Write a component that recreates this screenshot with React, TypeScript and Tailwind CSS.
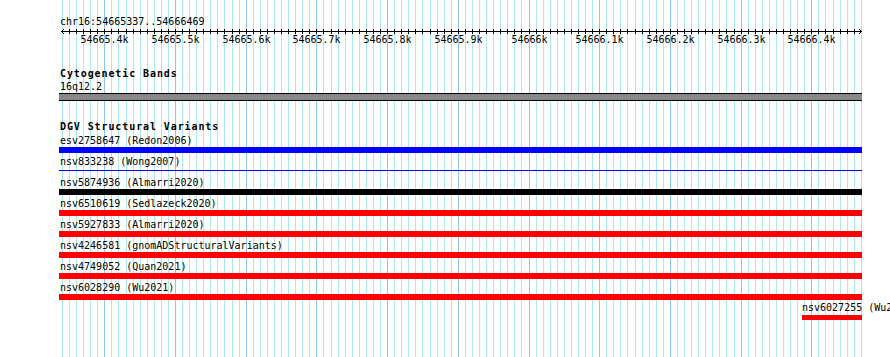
import React from "react";

const ticks = Array.from({ length: 114 }, (_, k) => {
  const i = k - 6;
  return { i, x: Math.round(104.3 + i * 7.07), major: i % 10 === 0 };
});

const majors = ticks
  .filter((t) => t.major)
  .map((t) => {
    const pos = 54665400 + t.i * 10;
    const k = pos / 1000;
    const label = (Number.isInteger(k) ? String(k) : k.toFixed(1)) + "k";
    return { x: t.x, label };
  });

type Row = { label: string; color: string; kind: "bar" | "line" };

const rows: Row[] = [
  { label: "esv2758647 (Redon2006)", color: "bg-[#0000ff]", kind: "bar" },
  { label: "nsv833238 (Wong2007)", color: "bg-[#0000ff]", kind: "line" },
  { label: "nsv5874936 (Almarri2020)", color: "bg-[#000000]", kind: "bar" },
  { label: "nsv6510619 (Sedlazeck2020)", color: "bg-[#ff0000]", kind: "bar" },
  { label: "nsv5927833 (Almarri2020)", color: "bg-[#ff0000]", kind: "bar" },
  { label: "nsv4246581 (gnomADStructuralVariants)", color: "bg-[#ff0000]", kind: "bar" },
  { label: "nsv4749052 (Quan2021)", color: "bg-[#ff0000]", kind: "bar" },
  { label: "nsv6028290 (Wu2021)", color: "bg-[#ff0000]", kind: "bar" },
];

function Grid() {
  return (
    <svg className="absolute inset-0" width={890} height={357} shapeRendering="crispEdges">
      {ticks.map((t) => (
        <rect
          key={t.i}
          x={t.x}
          y={0}
          width={1}
          height={357}
          fill={t.major ? "#8cc8ee" : "#ace8ee"}
        />
      ))}
    </svg>
  );
}

function Ruler() {
  return (
    <div className="relative h-[18px] w-[803px]">
      <svg className="absolute left-0 top-0" width={803} height={18} shapeRendering="crispEdges">
        <rect x={2} y={4} width={801} height={1} fill="#000" />
        {ticks
          .filter((t) => t.x > 62 && t.x < 860)
          .map((t) => (
            <rect key={t.i} x={t.x - 59} y={2} width={1} height={5} fill="#000" />
          ))}
        <rect x={2} y={4} width={1} height={1} fill="#000" />
        <rect x={3} y={3} width={1} height={1} fill="#000" />
        <rect x={3} y={5} width={1} height={1} fill="#000" />
        <rect x={4} y={2} width={1} height={1} fill="#000" />
        <rect x={4} y={6} width={1} height={1} fill="#000" />
        <rect x={802} y={4} width={1} height={1} fill="#000" />
        <rect x={801} y={3} width={1} height={1} fill="#000" />
        <rect x={801} y={5} width={1} height={1} fill="#000" />
        <rect x={800} y={2} width={1} height={1} fill="#000" />
        <rect x={800} y={6} width={1} height={1} fill="#000" />
      </svg>
      {majors.map((m) => (
        <span
          key={m.label}
          className="absolute top-[8px] -translate-x-1/2 whitespace-nowrap text-[10px] leading-[10px]"
          style={{ left: m.x - 59 + 0.5 }}
        >
          {m.label}
        </span>
      ))}
    </div>
  );
}

export default function App() {
  return (
    <div className="relative h-[357px] w-[890px] overflow-hidden bg-white font-['DejaVu_Sans_Mono',monospace] text-black">
      <Grid />
      <div className="relative flex flex-col pl-[59px] pt-[17px]">
        <div className="h-[10px] whitespace-nowrap pl-[1px] text-[10px] leading-[10px]">
          chr16:54665337..54666469
        </div>
        <Ruler />
        <div className="mt-[24px] h-[10px] whitespace-nowrap pl-[1px] text-[10px] font-bold leading-[10px] tracking-[0.9px]">
          Cytogenetic Bands
        </div>
        <div className="mt-[3px] h-[10px] whitespace-nowrap pl-[1px] text-[10px] leading-[10px]">
          16q12.2
        </div>
        <div className="mt-[1px] h-[8px] w-[803px] border-y border-black bg-[#888888]" />
        <div className="mt-[21px] h-[10px] whitespace-nowrap pl-[1px] text-[10px] font-bold leading-[10px] tracking-[0.9px]">
          DGV Structural Variants
        </div>
        {rows.map((r) => (
          <div key={r.label} className="flex flex-col">
            <div className="mt-[4px] h-[10px] whitespace-nowrap pl-[1px] text-[10px] leading-[10px]">
              {r.label}
            </div>
            {r.kind === "bar" ? (
              <div className={`mt-[1px] h-[6px] w-[803px] ${r.color}`} />
            ) : (
              <div className="mt-[1px] flex h-[6px] w-[803px] flex-col pt-[2px]">
                <div className={`h-[1px] w-full ${r.color}`} />
              </div>
            )}
          </div>
        ))}
        <div className="ml-[743px] mt-[3px] h-[10px] whitespace-nowrap text-[10px] leading-[10px]">
          nsv6027255 (Wu2021)
        </div>
        <div className="ml-[743px] mt-[2px] h-[5px] w-[60px] bg-[#ff0000]" />
      </div>
    </div>
  );
}
